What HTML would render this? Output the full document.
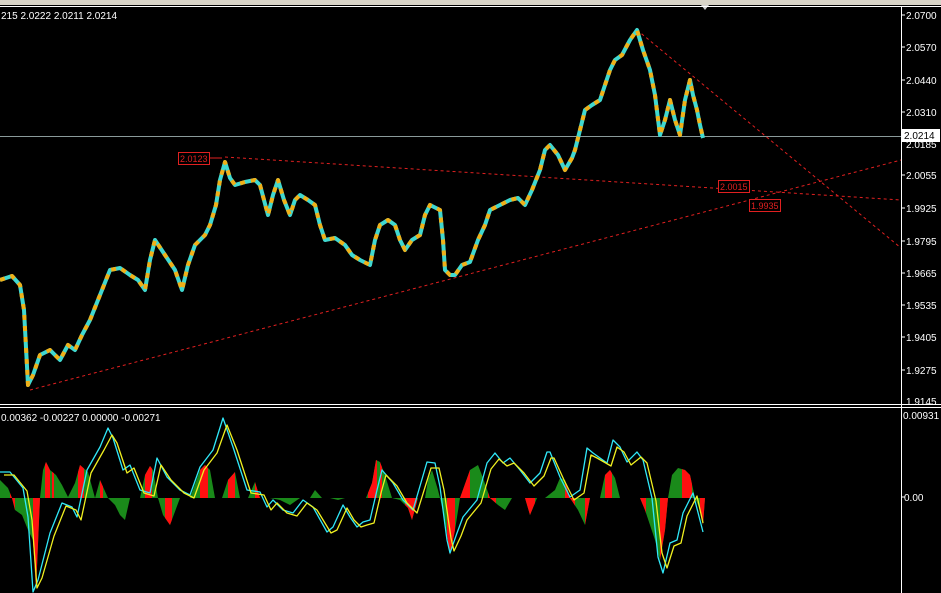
<!DOCTYPE html>
<html><head><style>
html,body{margin:0;padding:0;background:#000;width:941px;height:593px;overflow:hidden}
svg{display:block;font-family:"Liberation Sans",sans-serif}
</style></head><body>
<svg width="941" height="593" viewBox="0 0 941 593" xmlns="http://www.w3.org/2000/svg">
<rect width="941" height="593" fill="#000"/>
<rect x="0" y="0" width="941" height="5" fill="#d8d4c8"/>
<polygon points="701,5 709,5 705,10" fill="#cfcfcf"/>
<line x1="0" y1="6.5" x2="941" y2="6.5" stroke="#fff"/>
<line x1="901.5" y1="6" x2="901.5" y2="593" stroke="#fff"/>
<line x1="0" y1="404.5" x2="941" y2="404.5" stroke="#fff"/>
<line x1="0" y1="407.5" x2="941" y2="407.5" stroke="#fff"/>
<text x="1" y="19" fill="#fff" font-size="10">215 2.0222 2.0211 2.0214</text>
<text x="1" y="421" fill="#fff" font-size="10">0.00362 -0.00227 0.00000 -0.00271</text>
<line x1="0" y1="136.5" x2="901" y2="136.5" stroke="#8a9a9a"/>
<g stroke="#e02020" stroke-dasharray="3 3" fill="none">
<line x1="225" y1="157" x2="901" y2="200"/>
<line x1="30" y1="390" x2="901" y2="160"/>
<line x1="637" y1="30" x2="901" y2="248"/>
</g>
<g fill="none" stroke-linejoin="round">
<polyline stroke="#40d8d0" stroke-width="4" points="0,280 12,276 20,285 24,310 28,385 33,375 40,355 50,350 60,360 68,345 75,350 82,335 90,320 100,295 110,270 120,268 130,275 138,280 145,290 150,260 155,240 165,255 175,270 182,290 188,265 195,245 205,235 210,225 216,205 220,180 225,162 230,178 235,185 245,182 255,180 260,185 268,215 273,195 278,180 284,200 290,215 295,200 300,195 308,200 315,205 320,225 325,240 335,238 345,245 352,255 360,260 370,265 375,240 380,225 388,220 395,225 400,240 405,250 412,240 420,235 425,215 430,205 440,210 443,240 445,270 450,275 455,275 462,265 470,262 478,240 485,225 490,210 500,205 510,200 518,198 525,205 532,190 540,170 545,150 550,145 558,155 565,170 572,158 575,150 580,130 585,110 592,105 600,100 605,85 610,70 615,60 622,55 630,40 637,30 643,50 650,70 655,95 660,135 665,120 670,100 675,120 680,135 685,100 690,80 693,95 697,110 700,125 703,138"/>
<polyline stroke="#f0b018" stroke-width="4" stroke-dasharray="5 6" points="0,280 12,276 20,285 24,310 28,385 33,375 40,355 50,350 60,360 68,345 75,350 82,335 90,320 100,295 110,270 120,268 130,275 138,280 145,290 150,260 155,240 165,255 175,270 182,290 188,265 195,245 205,235 210,225 216,205 220,180 225,162 230,178 235,185 245,182 255,180 260,185 268,215 273,195 278,180 284,200 290,215 295,200 300,195 308,200 315,205 320,225 325,240 335,238 345,245 352,255 360,260 370,265 375,240 380,225 388,220 395,225 400,240 405,250 412,240 420,235 425,215 430,205 440,210 443,240 445,270 450,275 455,275 462,265 470,262 478,240 485,225 490,210 500,205 510,200 518,198 525,205 532,190 540,170 545,150 550,145 558,155 565,170 572,158 575,150 580,130 585,110 592,105 600,100 605,85 610,70 615,60 622,55 630,40 637,30 643,50 650,70 655,95 660,135 665,120 670,100 675,120 680,135 685,100 690,80 693,95 697,110 700,125 703,138"/>
</g>
<g font-size="9">
<rect x="178.5" y="152.5" width="31" height="12" fill="#000" stroke="#e02020"/><text x="180" y="162" fill="#e02020">2.0123</text>
<line x1="209" y1="158" x2="222" y2="158" stroke="#e02020"/>
<rect x="718.5" y="180.5" width="31" height="12" fill="#000" stroke="#e02020"/><text x="720" y="190" fill="#e02020">2.0015</text>
<rect x="749.5" y="199.5" width="31" height="12" fill="#000" stroke="#e02020"/><text x="751" y="209" fill="#e02020">1.9935</text>
</g>
<g fill="#fff" font-size="10">
<text x="906" y="19">2.0700</text><text x="906" y="51">2.0570</text><text x="906" y="84">2.0440</text><text x="906" y="116">2.0310</text><text x="906" y="148">2.0185</text><text x="906" y="179">2.0055</text><text x="906" y="212">1.9925</text><text x="906" y="245">1.9795</text><text x="906" y="277">1.9665</text><text x="906" y="309">1.9535</text><text x="906" y="341">1.9405</text><text x="906" y="374">1.9275</text><text x="906" y="405">1.9145</text>
<text x="903" y="419">0.00931</text><text x="904" y="501">0.00</text>
</g>
<g stroke="#fff"><line x1="901" y1="15" x2="905" y2="15"/><line x1="901" y1="47" x2="905" y2="47"/><line x1="901" y1="80" x2="905" y2="80"/><line x1="901" y1="112" x2="905" y2="112"/><line x1="901" y1="175" x2="905" y2="175"/><line x1="901" y1="208" x2="905" y2="208"/><line x1="901" y1="241" x2="905" y2="241"/><line x1="901" y1="273" x2="905" y2="273"/><line x1="901" y1="305" x2="905" y2="305"/><line x1="901" y1="337" x2="905" y2="337"/><line x1="901" y1="370" x2="905" y2="370"/><line x1="901" y1="497" x2="905" y2="497"/></g>
<rect x="902" y="129" width="38" height="13" fill="#fff"/><text x="904" y="139" fill="#000" font-size="10">2.0214</text>
<defs><clipPath id="h"><polygon points="0,498 0,480 8,488 12,498 15,510 22,515 28,530 33,540 36,590 40,498 43,470 46,462 50,470 56,475 62,485 68,497 75,483 80,465 88,472 95,498 100,480 108,498 115,505 120,515 125,520 130,498 140,498 145,475 150,466 153,470 158,498 163,515 170,525 180,498 190,498 200,470 205,465 210,470 215,498 222,498 228,480 235,472 240,498 248,498 255,482 260,498 270,498 280,500 290,505 300,498 310,498 315,490 322,498 330,498 338,500 345,498 366,498 372,483 376,460 380,462 385,475 392,498 400,500 408,508 412,520 418,498 425,498 428,480 432,470 438,490 440,498 445,520 450,555 455,530 460,498 470,470 478,465 483,478 490,498 498,505 505,510 512,498 525,498 530,515 537,498 545,498 555,490 560,478 565,480 570,498 578,510 585,525 590,498 600,498 605,475 610,470 615,478 620,498 630,498 640,498 645,510 650,525 655,540 660,560 665,530 668,498 672,475 678,468 685,470 690,475 695,498 700,510 703,525 705,498"/></clipPath></defs>
<g clip-path="url(#h)">
<rect x="0" y="440" width="706" height="160" fill="#1a8a1a"/>
<g fill="#ff1010">
<rect x="10" y="440" width="5" height="160"/><rect x="33" y="440" width="7" height="160"/><rect x="45" y="440" width="5" height="160"/><rect x="52" y="440" width="2" height="160"/><rect x="78" y="440" width="6" height="160"/><rect x="100" y="440" width="3" height="160"/><rect x="145" y="440" width="7" height="160"/><rect x="165" y="440" width="7" height="160"/><rect x="200" y="440" width="8" height="160"/><rect x="228" y="440" width="7" height="160"/><rect x="255" y="440" width="5" height="160"/><rect x="368" y="440" width="9" height="160"/><rect x="380" y="440" width="2" height="160"/><rect x="405" y="440" width="12" height="160"/><rect x="447" y="440" width="8" height="160"/><rect x="460" y="440" width="10" height="160"/><rect x="488" y="440" width="8" height="160"/><rect x="525" y="440" width="10" height="160"/><rect x="565" y="440" width="10" height="160"/><rect x="585" y="440" width="5" height="160"/><rect x="605" y="440" width="7" height="160"/><rect x="640" y="440" width="6" height="160"/><rect x="660" y="440" width="8" height="160"/><rect x="682" y="440" width="10" height="160"/><rect x="700" y="440" width="6" height="160"/>
</g></g>
<g fill="none" stroke-width="1.3" stroke-linejoin="round">
<polyline id="c" stroke="#30e8f8" points="0,472 10,472 23,488 28,517 33,592 38,580 50,533 62,503 72,507 77,517 87,470 100,447 108,428 113,438 123,470 130,465 140,490 150,493 157,458 167,477 180,490 190,495 200,467 213,450 223,418 233,447 247,490 260,492 267,507 273,500 283,510 293,513 303,500 313,507 327,532 333,527 343,505 350,517 357,527 363,522 370,520 377,490 382,470 393,483 403,500 413,510 427,462 435,463 440,487 447,540 450,553 457,533 463,517 477,500 487,463 495,453 503,463 510,458 520,470 530,483 540,473 547,452 550,452 560,477 570,497 580,490 587,448 593,453 607,463 613,440 620,447 627,462 637,452 643,460 652,498 658,557 663,573 670,543 677,540 683,513 693,493 703,532"/>
<polyline stroke="#f0f020" transform="translate(4,3)" points="0,472 10,472 23,488 28,517 33,585 38,575 50,533 62,503 72,507 77,517 87,470 100,447 108,432 113,440 123,470 130,465 140,490 150,493 157,462 167,477 180,490 190,495 200,467 213,450 223,422 233,447 247,490 260,492 267,507 273,500 283,510 293,513 303,500 313,507 327,530 333,527 343,505 350,517 357,524 363,522 370,520 377,490 382,472 393,483 403,500 413,510 427,465 435,465 440,487 447,535 450,548 457,533 463,517 477,500 487,466 495,456 503,463 510,460 520,470 530,483 540,473 547,455 550,455 560,477 570,497 580,490 587,452 593,455 607,463 613,444 620,449 627,462 637,454 643,460 652,498 658,550 663,565 670,543 677,540 683,513 693,493 699,520"/>
</g>
</svg>
</body></html>
